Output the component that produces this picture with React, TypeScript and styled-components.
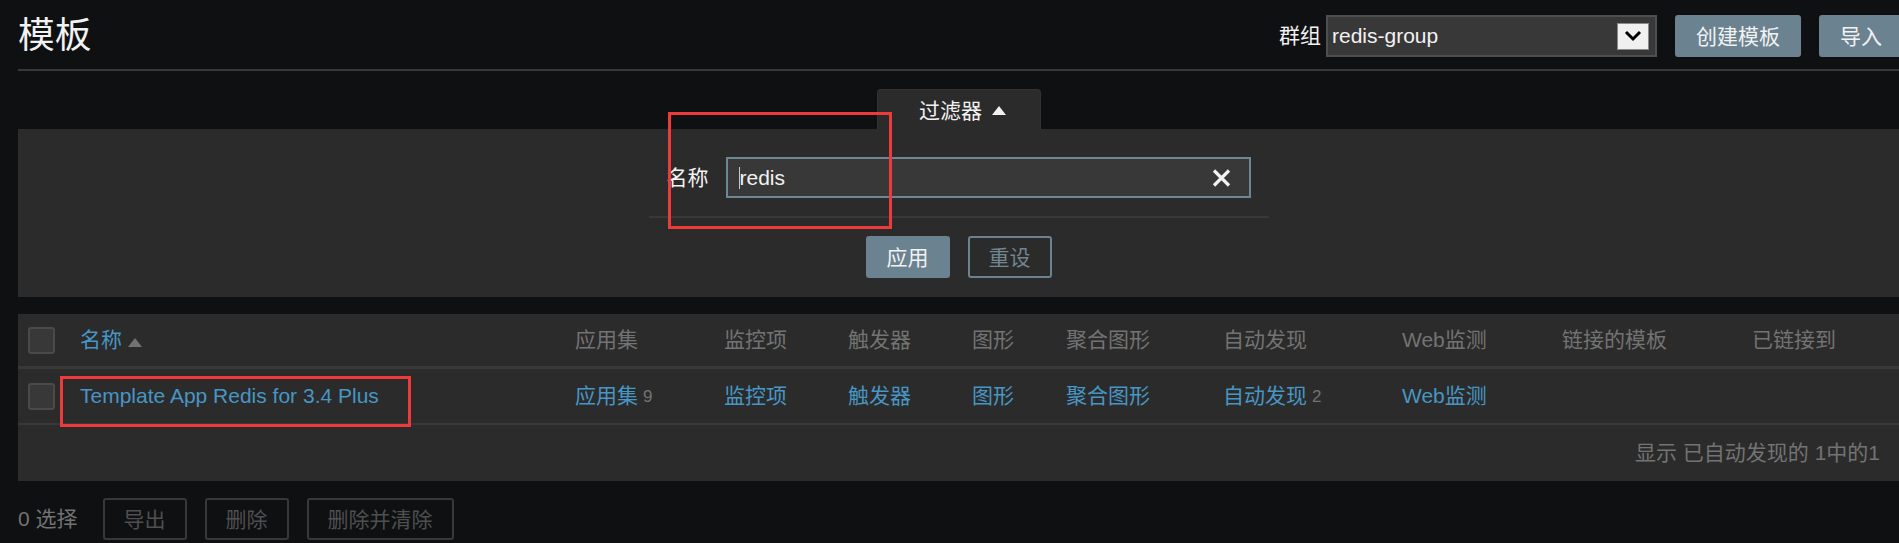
import React from "react";
import styled, { createGlobalStyle } from "styled-components";

const GlobalStyle = createGlobalStyle`
  html, body {
    margin: 0;
    padding: 0;
    background: #0e1012;
    overflow: hidden;
  }
  body {
    font-family: "Liberation Sans", Arial, "Noto Sans CJK SC", sans-serif;
    font-size: 21px;
    line-height: 1.2;
    color: #f2f2f2;
  }
`;

const Page = styled.div`
  position: relative;
  padding-left: 18px;
  min-height: 543px;
`;

const Header = styled.header`
  display: flex;
  align-items: center;
  justify-content: space-between;
  padding: 15px 0 12px;
  border-bottom: 2px solid #383838;
`;

const Title = styled.h1`
  margin: 0;
  font-size: 36.75px;
  font-weight: normal;
  line-height: 42px;
  color: #f2f2f2;
`;

const Controls = styled.div`
  display: flex;
  align-items: center;
  margin-right: -4px;
`;

const GroupLabel = styled.span`
  margin-right: 5px;
`;

const Select = styled.div`
  width: 331px;
  height: 42px;
  box-sizing: border-box;
  border: 2px solid #4f4f4f;
  background: #383838;
  display: flex;
  align-items: center;
  justify-content: space-between;
  padding: 0 6px 0 4px;
  margin-right: 18px;
`;

const SelectArrow = styled.span`
  width: 32px;
  height: 27px;
  box-sizing: border-box;
  background: #f0f0f0;
  border: 1px solid #8a8a8a;
  display: flex;
  align-items: center;
  justify-content: center;
`;

const Button = styled.button<{ $kind?: "primary" | "alt" | "off" }>`
  height: 42px;
  box-sizing: border-box;
  padding: 0 19px;
  border-radius: 3px;
  font: inherit;
  line-height: 1;
  white-space: nowrap;
  border: 2px solid
    ${(p) => (p.$kind === "off" ? "#383838" : "#6b8290")};
  background: ${(p) => (p.$kind === "alt" || p.$kind === "off" ? "transparent" : "#6b8290")};
  color: ${(p) =>
    p.$kind === "off" ? "#4f4f4f" : p.$kind === "alt" ? "#71868f" : "#f2f2f2"};
  & + & {
    margin-left: 18px;
  }
`;

const FilterWrap = styled.section`
  margin-top: 18px;
`;

const TabRow = styled.div`
  display: flex;
  justify-content: center;
`;

const Tab = styled.div`
  width: 164px;
  height: 40px;
  box-sizing: border-box;
  padding: 2px 0 0 8px;
  background: #2b2b2b;
  border: 1px solid #333;
  border-bottom: none;
  border-radius: 4px 4px 0 0;
  display: flex;
  align-items: center;
  justify-content: center;
  gap: 10px;
`;

const Triangle = styled.span<{ $color: string }>`
  display: inline-block;
  width: 0;
  height: 0;
  border-left: 7px solid transparent;
  border-right: 7px solid transparent;
  border-bottom: 9px solid ${(p) => p.$color};
`;

const FilterPanel = styled.div`
  background: #2b2b2b;
  padding: 28px 0 19px;
  display: flex;
  flex-direction: column;
  align-items: center;
`;

const FieldRow = styled.div`
  display: flex;
  align-items: center;
  gap: 17px;
`;

const TextField = styled.div`
  width: 525px;
  height: 41px;
  box-sizing: border-box;
  border: 2px solid #6e8794;
  background: #383838;
  display: flex;
  align-items: center;
  padding: 0 18px 0 11px;
`;

const Caret = styled.span`
  width: 1px;
  height: 22px;
  background: #c8c8c8;
`;

const FieldValue = styled.span`
  flex: 1;
  color: #f2f2f2;
`;

const Separator = styled.div`
  width: 620px;
  height: 2px;
  background: #383838;
  margin: 18px 0;
`;

const Actions = styled.div`
  display: flex;
`;

const Table = styled.div`
  margin-top: 17px;
  background: #2b2b2b;
`;

const Row = styled.div<{ $h: number; $line: number }>`
  display: grid;
  grid-template-columns: 52px 495px 149px 124px 124px 94px 157px 179px 160px 190px 1fr;
  align-items: center;
  padding-left: 10px;
  height: ${(p) => p.$h}px;
  box-sizing: border-box;
  border-bottom: ${(p) => p.$line}px solid #383838;
`;

const Cell = styled.div<{ $muted?: boolean }>`
  white-space: nowrap;
  color: ${(p) => (p.$muted ? "#737373" : "#f2f2f2")};
  display: flex;
  align-items: center;
`;

const Link = styled.span`
  color: #4796c4;
`;

const Count = styled.span`
  color: #737373;
  font-size: 17px;
  margin-left: 5px;
  padding-top: 3px;
`;

const SortArrow = styled.span`
  margin-left: 6px;
  padding-top: 4px;
  display: inline-flex;
`;

const Checkbox = styled.span`
  width: 27px;
  height: 27px;
  box-sizing: border-box;
  border: 2px solid #4a4a4a;
  border-radius: 3px;
  background: #383838;
`;

const Paging = styled.div`
  height: 56px;
  display: flex;
  align-items: center;
  justify-content: flex-end;
  padding-right: 19px;
  color: #737373;
`;

const BottomBar = styled.div`
  margin-top: 17px;
  display: flex;
  align-items: center;
`;

const Selected = styled.span`
  color: #737373;
  margin-right: 25px;
`;

const Mark = styled.div<{ $x: number; $y: number; $w: number; $h: number }>`
  position: absolute;
  left: ${(p) => p.$x}px;
  top: ${(p) => p.$y}px;
  width: ${(p) => p.$w}px;
  height: ${(p) => p.$h}px;
  box-sizing: border-box;
  border: 3px solid #ee3a3a;
  pointer-events: none;
`;

const columns = ["应用集", "监控项", "触发器", "图形", "聚合图形", "自动发现", "Web监测", "链接的模板", "已链接到"];

export default function App() {
  return (
    <Page>
      <GlobalStyle />
      <Header>
        <Title>模板</Title>
        <Controls>
          <GroupLabel>群组</GroupLabel>
          <Select>
            <span>redis-group</span>
            <SelectArrow>
              <svg width="18" height="12" viewBox="0 0 18 12">
                <polyline points="2,2 9,9 16,2" fill="none" stroke="#000" strokeWidth="3" />
              </svg>
            </SelectArrow>
          </Select>
          <Button>创建模板</Button>
          <Button>导入</Button>
        </Controls>
      </Header>

      <FilterWrap>
        <TabRow>
          <Tab>
            过滤器
            <Triangle $color="#f2f2f2" />
          </Tab>
        </TabRow>
        <FilterPanel>
          <FieldRow>
            <span>名称</span>
            <TextField>
              <Caret />
              <FieldValue>redis</FieldValue>
              <svg width="19" height="18" viewBox="0 0 19 18">
                <path d="M2 1.5 L17 16.5 M17 1.5 L2 16.5" stroke="#f2f2f2" strokeWidth="3.2" />
              </svg>
            </TextField>
          </FieldRow>
          <Separator />
          <Actions>
            <Button>应用</Button>
            <Button $kind="alt">重设</Button>
          </Actions>
        </FilterPanel>
      </FilterWrap>

      <Table>
        <Row $h={55} $line={3}>
          <Checkbox />
          <Cell>
            <Link>名称</Link>
            <SortArrow>
              <Triangle $color="#737373" />
            </SortArrow>
          </Cell>
          {columns.map((c) => (
            <Cell key={c} $muted>
              {c}
            </Cell>
          ))}
        </Row>
        <Row $h={56} $line={2}>
          <Checkbox />
          <Cell>
            <Link>Template App Redis for 3.4 Plus</Link>
          </Cell>
          <Cell>
            <Link>应用集</Link>
            <Count>9</Count>
          </Cell>
          <Cell>
            <Link>监控项</Link>
          </Cell>
          <Cell>
            <Link>触发器</Link>
          </Cell>
          <Cell>
            <Link>图形</Link>
          </Cell>
          <Cell>
            <Link>聚合图形</Link>
          </Cell>
          <Cell>
            <Link>自动发现</Link>
            <Count>2</Count>
          </Cell>
          <Cell>
            <Link>Web监测</Link>
          </Cell>
          <Cell />
          <Cell />
        </Row>
        <Paging>显示 已自动发现的 1中的1</Paging>
      </Table>

      <BottomBar>
        <Selected>0 选择</Selected>
        <Button $kind="off">导出</Button>
        <Button $kind="off">删除</Button>
        <Button $kind="off">删除并清除</Button>
      </BottomBar>

      <Mark $x={668} $y={112} $w={224} $h={117} />
      <Mark $x={60} $y={376} $w={351} $h={51} />
    </Page>
  );
}
